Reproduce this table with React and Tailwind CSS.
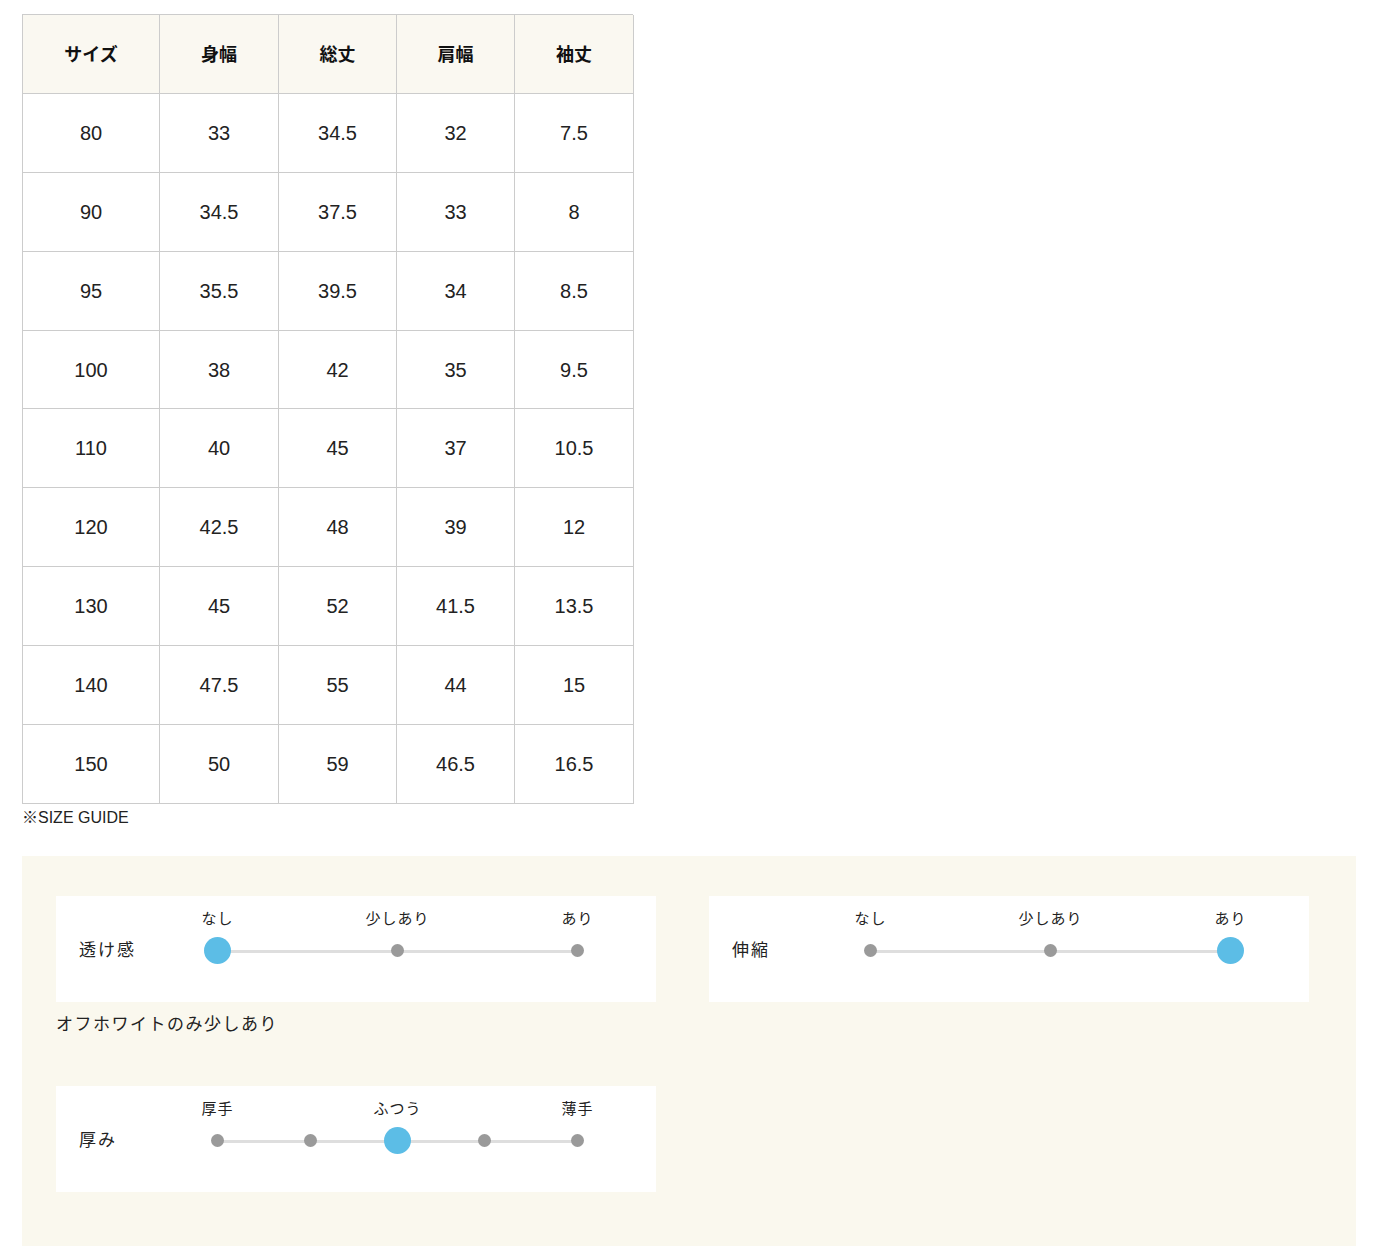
import React from 'react';

const headers = ['サイズ', '身幅', '総丈', '肩幅', '袖丈'];

const rows = [
  ['80', '33', '34.5', '32', '7.5'],
  ['90', '34.5', '37.5', '33', '8'],
  ['95', '35.5', '39.5', '34', '8.5'],
  ['100', '38', '42', '35', '9.5'],
  ['110', '40', '45', '37', '10.5'],
  ['120', '42.5', '48', '39', '12'],
  ['130', '45', '52', '41.5', '13.5'],
  ['140', '47.5', '55', '44', '15'],
  ['150', '50', '59', '46.5', '16.5'],
];

const fontStack = { fontFamily: '"Liberation Sans", "Noto Sans CJK JP", sans-serif' };

// spacer widths between stops
const gapClass = {
  180: 'w-[180px]',
  93: 'w-[93px]',
  87: 'w-[87px]',
};

function Stops({ gaps, render }) {
  const out = [];
  for (let i = 0; i <= gaps.length; i++) {
    out.push(
      <div key={`s${i}`} className="relative flex w-0 shrink-0 justify-center">
        {render(i)}
      </div>
    );
    if (i < gaps.length) {
      out.push(<div key={`g${i}`} className={`shrink-0 ${gapClass[gaps[i]]}`} />);
    }
  }
  return out;
}

function Slider({ label, gaps, labels, active }) {
  return (
    <div className="flex h-[106px] w-[600px] bg-white pl-[23px]">
      <div className="w-[138px] pt-[43px] text-[17px] leading-[24px] tracking-[2px] text-[#222]">
        {label}
      </div>
      <div className="w-[360px] pt-[12px]">
        {/* labels above the track */}
        <div className="flex h-[22px] text-[15px] leading-[22px] tracking-[1px] text-[#222]">
          <Stops
            gaps={gaps}
            render={(i) => <span className="whitespace-nowrap pl-[1px]">{labels[i] || ''}</span>}
          />
        </div>
        {/* track with dots */}
        <div className="relative mt-[7px] flex h-[28px] items-center">
          <div className="absolute inset-x-0 top-[13px] h-[3px] bg-[#dedede]" />
          <Stops
            gaps={gaps}
            render={(i) =>
              i === active ? (
                <div className="h-[27px] w-[27px] shrink-0 rounded-full bg-[#5cbde6]" />
              ) : (
                <div className="h-[13px] w-[13px] shrink-0 rounded-full bg-[#9a9a9a]" />
              )
            }
          />
        </div>
      </div>
    </div>
  );
}

export default function App() {
  return (
    <div className="min-h-[1258px] bg-white pl-[22px] pt-[14px] text-[#222]" style={fontStack}>
      {/* size table */}
      <div className="grid w-[611px] grid-cols-[137px_119px_118px_118px_119px] border-l border-t border-[#cccccc]">
        {headers.map((h) => (
          <div
            key={h}
            className="flex h-[78.9px] items-center justify-center border-b border-r border-[#cccccc] bg-[#faf8f1] pt-[3px] text-[18px] font-bold text-[#111]"
          >
            {h}
          </div>
        ))}
        {rows.map((row, r) =>
          row.map((cell, c) => (
            <div
              key={`${r}-${c}`}
              className="flex h-[78.9px] items-center justify-center border-b border-r border-[#cccccc] text-[20px]"
            >
              {cell}
            </div>
          ))
        )}
      </div>
      <p className="mt-[4px] text-[16px] leading-5 text-[#222]">※SIZE GUIDE</p>

      {/* fabric details */}
      <div className="mt-[28px] w-[1334px] bg-[#faf8ee] pb-[54px] pl-[34px] pt-[40px]">
        <div className="grid grid-cols-[600px_600px] gap-x-[53px] gap-y-[49px]">
          <div>
            <Slider label="透け感" gaps={[180, 180]} labels={['なし', '少しあり', 'あり']} active={0} />
            <p className="mt-[11px] text-[17px] leading-[24px] tracking-[1.5px] text-[#222]">
              オフホワイトのみ少しあり
            </p>
          </div>
          <div>
            <Slider label="伸縮" gaps={[180, 180]} labels={['なし', '少しあり', 'あり']} active={2} />
          </div>
          <div>
            <Slider
              label="厚み"
              gaps={[93, 87, 87, 93]}
              labels={['厚手', '', 'ふつう', '', '薄手']}
              active={2}
            />
          </div>
        </div>
      </div>
    </div>
  );
}
